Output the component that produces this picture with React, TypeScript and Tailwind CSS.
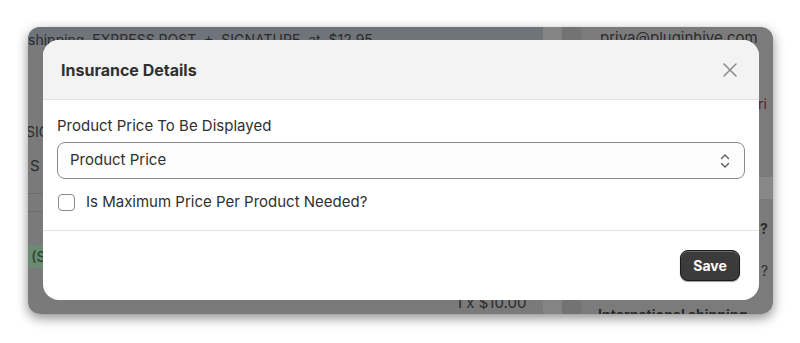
import React from "react";

const BgText: React.FC<{ className?: string; children: React.ReactNode }> = ({
  className,
  children,
}) => (
  <div className={`absolute whitespace-nowrap text-[14px] text-[#2b2b2b] ${className ?? ""}`}>
    {children}
  </div>
);

const Backdrop: React.FC = () => (
  <div className="flex h-full w-full">
    {/* left main column */}
    <div className="flex w-[515px] flex-col bg-[#7a7a7a]">
      <div className="h-[18px] bg-[#6f747a]" />
      <div className="h-[148px]" />
      <div className="h-[19px] border-t border-b border-[#6c6c6c]" />
      <div className="h-[33px]" />
      <div className="h-[23px] w-[15px] bg-[#6a8a73]" />
    </div>
    <div className="w-[19px] bg-[#848484]" />
    <div className="w-[19px] bg-[#737373]" />
    {/* right column */}
    <div className="flex flex-1 flex-col bg-[#7b7b7b]">
      <div className="h-[150px]" />
      <div className="h-[22px] bg-[#888888]" />
    </div>
  </div>
);

const CloseIcon = () => (
  <svg width="14" height="14" viewBox="0 0 14 14" fill="none">
    <path d="M1 1L13 13M13 1L1 13" stroke="#8a8a8a" strokeWidth="1.5" strokeLinecap="round" />
  </svg>
);

const SelectIcon = () => (
  <svg width="10" height="16" viewBox="0 0 10 16" fill="none">
    <path d="M1.5 5.5L5 2L8.5 5.5M1.5 10.5L5 14L8.5 10.5" stroke="#5a5a5a" strokeWidth="1.4" strokeLinecap="round" strokeLinejoin="round" />
  </svg>
);

const App: React.FC = () => {
  return (
    <div className="h-[343px] w-[800px] bg-white pl-[28px] pt-[27px] font-['Inter',sans-serif]">
      <div className="relative h-[287px] w-[745px] overflow-hidden rounded-[12px] shadow-[0_4px_12px_rgba(0,0,0,0.45)]">
        <Backdrop />
        <BgText className="left-0 top-[2px]">shipping&nbsp; EXPRESS POST&nbsp; +&nbsp; SIGNATURE&nbsp; at&nbsp; $12.95</BgText>
        <BgText className="left-[572px] top-0 text-[15px]">priya@pluginhive.com</BgText>
        <BgText className="left-[-2px] top-[94px]">SIG</BgText>
        <BgText className="left-[2px] top-[128px] text-[15px]">S</BgText>
        <BgText className="left-[-4px] top-[219px] font-semibold text-[#2f4a38]">l (S</BgText>
        <BgText className="left-[428px] top-[265px] text-[15px]">1 x $10.00</BgText>
        <BgText className="left-[730px] top-[66px] text-[#5a2020]">ri</BgText>
        <BgText className="left-[732px] top-[191px] font-bold">?</BgText>
        <BgText className="left-[733px] top-[233px]">?</BgText>
        <BgText className="left-[570px] top-[277px] font-bold">International shipping</BgText>

        {/* modal */}
        <div className="absolute left-[15px] top-[13px] flex h-[260px] w-[716px] flex-col overflow-hidden rounded-[16px] bg-white">
          <div className="flex h-[60px] items-center justify-between border-b border-[#e3e3e3] bg-[#f3f3f3] pl-[18px] pr-[22px]">
            <span className="text-[16px] font-bold text-[#303030]">Insurance Details</span>
            <CloseIcon />
          </div>
          <div className="flex h-[131px] flex-col border-b border-[#e3e3e3] px-[14px] pt-[16px]">
            <label className="text-[15px] leading-[20px] text-[#303030]">Product Price To Be Displayed</label>
            <div className="mt-[6px] flex h-[37px] items-center justify-between rounded-[8px] border border-[#8a8a8a] bg-[#fdfdfd] pl-[12px] pr-[14px]">
              <span className="text-[15px] text-[#303030]">Product Price</span>
              <SelectIcon />
            </div>
            <div className="mt-[12px] flex items-center gap-[11px] pl-[1px]">
              <div className="h-[17px] w-[17px] rounded-[4px] border border-[#8a8a8a] bg-white" />
              <span className="text-[15px] text-[#303030]">Is Maximum Price Per Product Needed?</span>
            </div>
          </div>
          <div className="flex flex-1 items-center justify-end pr-[19px]">
            <button className="h-[31px] w-[60px] rounded-[8px] border border-[#1a1a1a] bg-[#3b3b3b] text-[14px] font-bold text-white shadow-[inset_0_1px_0_rgba(255,255,255,0.25),0_1px_1px_rgba(0,0,0,0.4)]">
              Save
            </button>
          </div>
        </div>
      </div>
    </div>
  );
};

export default App;
